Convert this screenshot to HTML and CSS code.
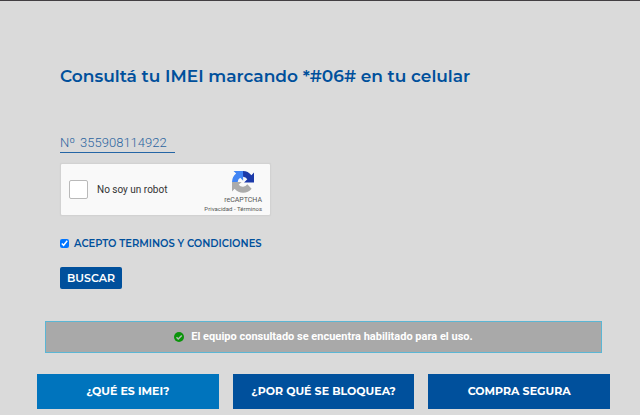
FILE: index.html
```html
<!DOCTYPE html>
<html lang="es">
<head>
<meta charset="utf-8">
<meta name="viewport" content="width=device-width, initial-scale=1">
<title>Consulta de IMEI</title>
<link rel="stylesheet" href="styles.css">
</head>
<body>
<main class="page">
  <form class="query">
    <h1 class="title">Consultá tu IMEI marcando *#06# en tu celular</h1>
    <div class="imei">
      <label for="imei">Nº</label>
      <input id="imei" type="text" inputmode="numeric" value="355908114922">
    </div>
    <div class="captcha">
      <label class="captcha-check"><input type="checkbox">No soy un robot</label>
      <div class="captcha-brand">
        <svg class="captcha-logo" viewBox="0 0 64 64" aria-hidden="true">
          <path fill="#1c3aa9" d="M64 32V4.500l-7.600 7.600A32 32 0 0 0 32 0v16.500a15.800 15.800 0 0 1 12.500 7.500L35 33.500h29z"/>
          <path fill="#4285f4" d="M32 0H4.500l7.600 7.600A32 32 0 0 0 0 32h16.500A15.800 15.800 0 0 1 24 19.500l8.500 8.500z"/>
          <path fill="#ababab" d="M0 32v27.500l7.600-7.600a32 32 0 0 0 49.500-.600L44.500 38.700A15.800 15.800 0 0 1 19.500 40l8.500-8z"/>
        </svg>
        <span class="captcha-name">reCAPTCHA</span>
        <span class="captcha-links"><a href="#">Privacidad</a> - <a href="#">Términos</a></span>
      </div>
    </div>
    <label class="terms"><input type="checkbox" checked>ACEPTO TERMINOS Y CONDICIONES</label>
    <button class="search" type="submit">BUSCAR</button>
  </form>
  <p class="alert" role="status">
    <svg class="alert-icon" viewBox="0 0 20 20" aria-hidden="true">
      <circle cx="10" cy="10" r="10" fill="#0a940a"/>
      <path d="M5 10.500l3.500 3.500L15.500 7" fill="none" stroke="#b4bfb4" stroke-width="3"/>
    </svg>
    El equipo consultado se encuentra habilitado para el uso.
  </p>
  <nav class="tabs">
    <a class="tab tab-active" href="#">¿QUÉ ES IMEI?</a>
    <a class="tab" href="#">¿POR QUÉ SE BLOQUEA?</a>
    <a class="tab" href="#">COMPRA SEGURA</a>
  </nav>
</main>
</body>
</html>
```
FILE: styles.css
```css
* {
  box-sizing: border-box;
}

body {
  margin: 0;
  border-top: 1px solid #423f42;
  background: #dadada;
  color: #00509c;
  font-family: Montserrat, Inter, sans-serif;
}

.page {
  padding: 63px 30px 6px 37px;
}

.query {
  display: flex;
  flex-direction: column;
  align-items: flex-start;
  padding: 0 23px;
}

.title {
  margin: 0 0 45px;
  font-size: 17px;
  line-height: 24px;
  font-weight: 600;
}

.imei {
  display: flex;
  gap: 5px;
  width: 115px;
  margin-bottom: 10px;
  border-bottom: 1px solid #2465a5;
  color: #2c659f;
  font: 300 13px/19px Roboto, sans-serif;
}

.imei input {
  flex: 1;
  min-width: 0;
  padding: 0;
  border: 0;
  outline: 0;
  background: transparent;
  color: inherit;
  font: inherit;
}

.captcha {
  display: flex;
  justify-content: space-between;
  width: 211px;
  height: 53px;
  margin-bottom: 20px;
  padding: 0 8px;
  border: 1px solid #d2d2d2;
  border-radius: 2px;
  background: #f9f9f9;
  box-shadow: 0 0 1px #ccc;
  color: #333;
  font-family: Roboto, sans-serif;
}

.captcha-check {
  display: flex;
  align-items: center;
  gap: 9px;
  font-size: 10px;
}

.captcha-check input {
  appearance: none;
  width: 19px;
  height: 19px;
  margin: 0;
  border: 1px solid #b9b9b9;
  border-radius: 2px;
  background: #fff;
}

.captcha-brand {
  display: flex;
  flex-direction: column;
  align-items: flex-end;
  padding-top: 7px;
  color: #555;
}

.captcha-logo {
  width: 22px;
  height: 22px;
  margin-right: 8px;
}

.captcha-name {
  margin-top: 2px;
  font-size: 7px;
  line-height: 10px;
}

.captcha-links {
  font-size: 6px;
  line-height: 8px;
}

.captcha-links a {
  color: inherit;
  text-decoration: none;
}

.terms {
  display: flex;
  align-items: center;
  gap: 5px;
  margin-bottom: 16px;
  font-size: 10px;
  line-height: 15px;
  font-weight: 600;
}

.terms input {
  width: 9px;
  height: 9px;
  margin: 0;
  accent-color: #0075ff;
}

.search {
  padding: 0 7px;
  border: 0;
  border-radius: 2px;
  background: #00509c;
  color: #fff;
  font: 600 11px/22px Montserrat, Inter, sans-serif;
}

.alert {
  display: flex;
  align-items: center;
  justify-content: center;
  gap: 7px;
  margin: 32px 8px 21px;
  padding: 6px;
  border: 1px solid #5bb6d4;
  background: #a9a9a9;
  color: #fff;
  font: 700 11px/18px Roboto, sans-serif;
}

.alert-icon {
  width: 10px;
  height: 10px;
}

.tabs {
  display: grid;
  grid-template-columns: repeat(3, 1fr);
  gap: 14px;
}

.tab {
  padding: 8px 0;
  background: #00509c;
  color: #fff;
  font-size: 11px;
  line-height: 19px;
  font-weight: 700;
  text-align: center;
  text-decoration: none;
}

.tab-active {
  background: #0074bd;
}
```
